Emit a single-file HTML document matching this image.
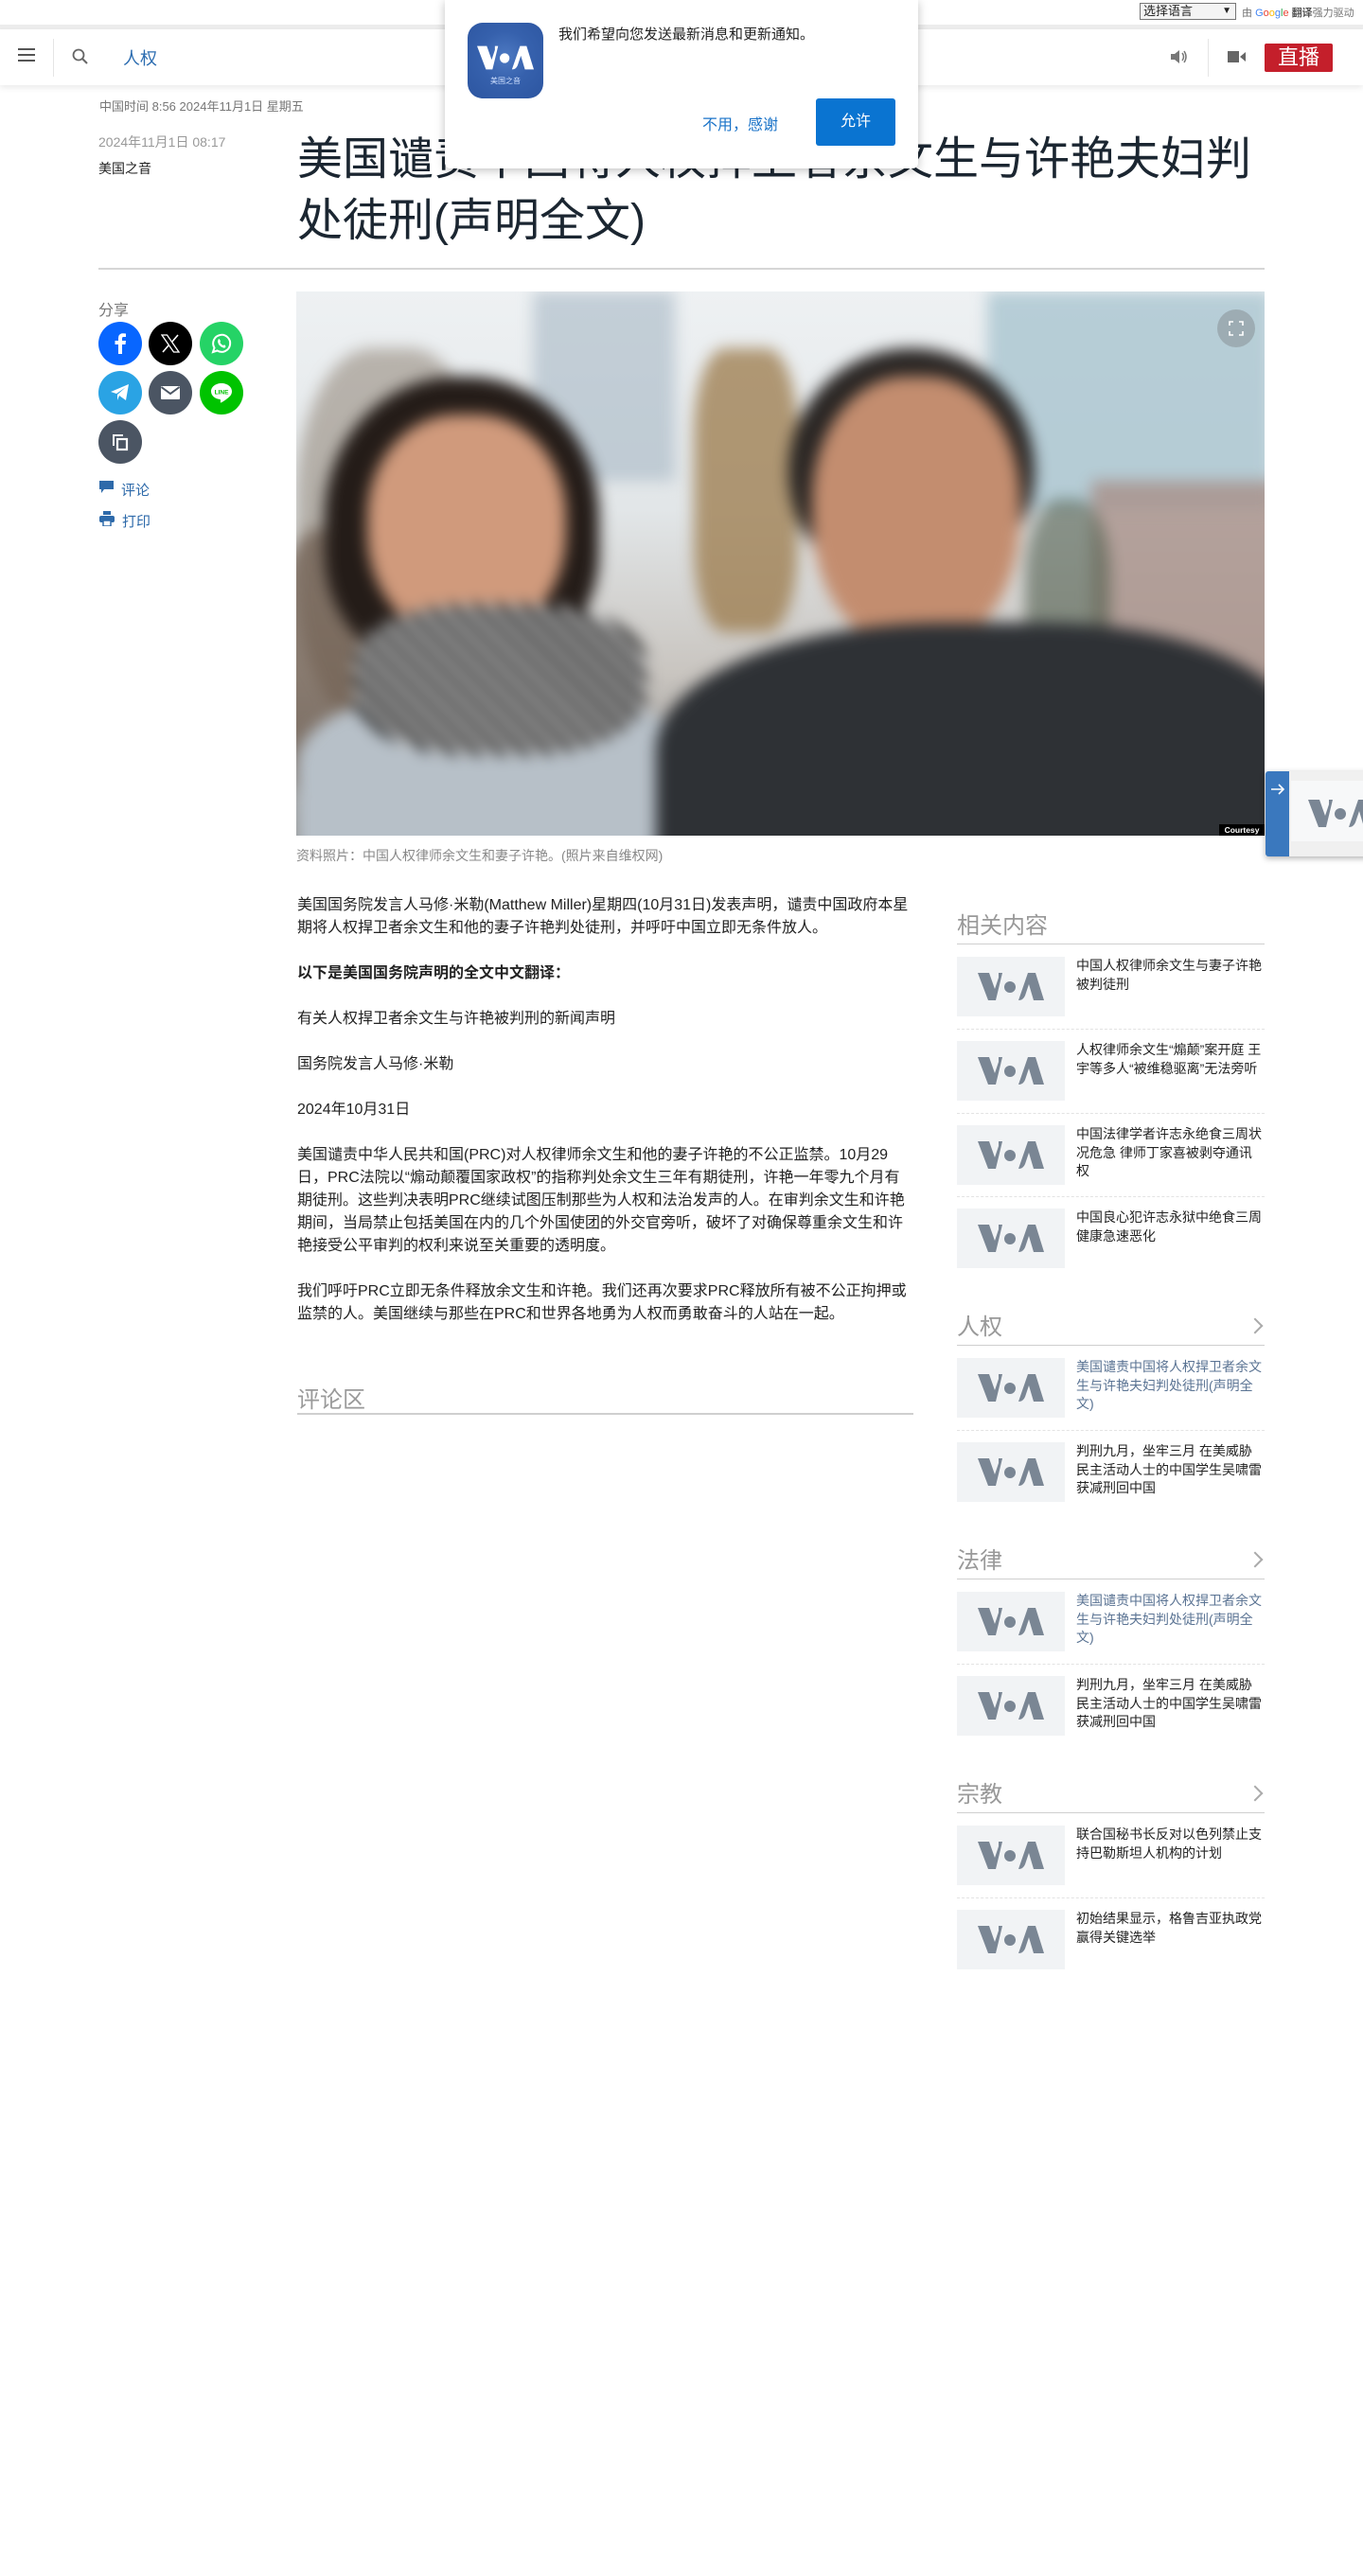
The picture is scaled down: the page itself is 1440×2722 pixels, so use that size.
<!DOCTYPE html>
<html lang="zh"><head><meta charset="utf-8">
<style>
*{box-sizing:border-box;margin:0;padding:0}
body{width:1440px;height:2722px;background:#fff;font-family:"Liberation Sans","Noto Sans CJK SC",sans-serif;color:#222;position:relative;overflow:hidden}
.abs{position:absolute}
.topbar{left:0;top:0;width:1440px;height:27px;background:#fff}
.band{left:0;top:26px;width:1440px;height:5px;background:#ececec}
.nav{left:0;top:31px;width:1440px;height:59px;background:#fff;box-shadow:0 3px 6px rgba(0,0,0,.08)}
.sel{left:1204px;top:3px;width:102px;height:18px;border:1px solid #767676;font-size:13px;padding-left:3px;line-height:16px;background:#f4f4f4}
.gt{left:1312px;top:5px;font-size:11px;color:#777}
.popup{left:470px;top:0;width:500px;height:178px;background:#fff;box-shadow:0 2px 10px rgba(0,0,0,.25);border-radius:0 0 6px 6px;z-index:50}
.circ{width:46px;height:46px;border-radius:50%;display:flex;align-items:center;justify-content:center}
.thumb{width:114px;height:63px;background:#f1f3f5;display:flex;align-items:center;justify-content:center}
.item{position:absolute;left:1011px;width:325px;height:63px}
.item .thumb{position:absolute;left:0;top:0}
.item .t{position:absolute;left:126px;top:0;width:197px;font-size:14px;line-height:19.5px;color:#222}
.item .t.b{color:#5a7393}
.dot{position:absolute;left:1011px;width:325px;border-top:1px dashed #e3e3e3}
.sh{position:absolute;left:1011px;width:325px;height:36px;border-bottom:1.5px solid #cfcfcf;font-size:24px;color:#999;line-height:34px}
.sh .chev{position:absolute;right:4px;top:9px;width:12px;height:12px;border-right:2px solid #aaa;border-top:2px solid #aaa;transform:rotate(45deg)}
.body{left:314px;top:945px;width:651px;font-size:16px;line-height:24px;color:#222}
.body p{margin-bottom:24px}
</style></head><body>

<div class="abs topbar"></div>
<div class="abs band"></div>
<div class="abs sel">选择语言 <span style="float:right;margin-right:4px;font-size:10px">▼</span></div>
<div class="abs gt">由 <span style="color:#4285f4">G</span><span style="color:#ea4335">o</span><span style="color:#fbbc05">o</span><span style="color:#4285f4">g</span><span style="color:#34a853">l</span><span style="color:#ea4335">e</span> <b style="color:#555">翻译</b>强力驱动</div>

<div class="abs nav">
  <svg class="abs" style="left:19px;top:19px" width="18" height="16" viewBox="0 0 18 16"><path d="M0 2H18M0 8H18M0 14H18" stroke="#555" stroke-width="2"/></svg>
  <div class="abs" style="left:56px;top:10px;width:1px;height:40px;background:#e5e5e5"></div>
  <svg class="abs" style="left:76px;top:20px" width="18" height="18" viewBox="0 0 18 18"><circle cx="7" cy="7" r="5.5" fill="none" stroke="#666" stroke-width="1.8"/><path d="M11 11L16 16" stroke="#666" stroke-width="2"/></svg>
  <div class="abs" style="left:130px;top:17px;font-size:18px;color:#2b6cb0">人权</div>
  <svg class="abs" style="left:1235px;top:20px" width="20" height="18" viewBox="0 0 20 18"><path d="M2 6H6L11 2V16L6 12H2Z" fill="#777"/><path d="M14 5Q17 9 14 13M16 3Q20 9 16 15" stroke="#777" stroke-width="1.5" fill="none"/></svg>
  <div class="abs" style="left:1276px;top:10px;width:1px;height:40px;background:#e5e5e5"></div>
  <svg class="abs" style="left:1297px;top:22px" width="20" height="14" viewBox="0 0 20 14"><rect x="0" y="1" width="12" height="12" fill="#666"/><path d="M13 7L19 2V12Z" fill="#666"/></svg>
  <div class="abs" style="left:1336px;top:15px;width:72px;height:30px;background:#c41f2b;border-radius:2px;color:#fff;font-size:22px;line-height:30px;text-align:center">直播</div>
</div>

<div class="abs" style="left:105px;top:102px;font-size:13px;color:#777">中国时间 8:56 2024年11月1日 星期五</div>
<div class="abs" style="left:104px;top:140px;font-size:14px;color:#999">2024年11月1日 08:17</div>
<div class="abs" style="left:104px;top:168px;font-size:14px;color:#222">美国之音</div>
<div class="abs" style="left:314px;top:136px;width:1030px;font-size:48px;line-height:65px;color:#1b2631">美国谴责中国将人权捍卫者余文生与许艳夫妇判处徒刑(声明全文)</div>
<div class="abs" style="left:104px;top:283px;width:1232px;height:2px;background:#d6d6d6"></div>

<div class="abs popup">
  <div class="abs" style="left:24px;top:24px;width:80px;height:80px;border-radius:16px;background:radial-gradient(circle at 50% 45%,#4d79c2 0,#3661ad 45%,#2c55a0 100%)">
    <svg class="abs" style="left:10px;top:24px" width="60" height="26" viewBox="0 0 70 29"><path d="M0 0H12L18 17L22 5V0H26L19 29H11Z" fill="#fff"/><circle cx="34" cy="15" r="6" fill="#fff"/><path d="M43 29L53 0H61L70 29H59L54 12L50 24Q48 29 43 29Z" fill="#fff"/></svg>
    <div class="abs" style="left:0;top:56px;width:80px;text-align:center;color:#cfe0ff;font-size:8px">美国之音</div>
  </div>
  <div class="abs" style="left:120px;top:25px;font-size:15px;color:#222">我们希望向您发送最新消息和更新通知。</div>
  <div class="abs" style="left:272px;top:118px;font-size:16px;color:#1a73c8">不用，感谢</div>
  <div class="abs" style="left:392px;top:104px;width:84px;height:50px;background:#0a74d1;border-radius:3px;color:#fff;font-size:16px;line-height:50px;text-align:center">允许</div>
</div>

<div class="abs" style="left:104px;top:314px;font-size:16px;color:#777">分享</div>
<div class="abs circ" style="left:104px;top:340px;background:#0866ff"><svg width="14" height="22" viewBox="0 0 14 22"><path d="M9 22V12H12.5L13 8H9V5.5Q9 4 10.5 4H13V0.5Q11.5 0.3 10 0.3Q5 0.3 5 5.5V8H1.5V12H5V22Z" fill="#fff"/></svg></div>
<div class="abs circ" style="left:157px;top:340px;background:#000"><svg width="20" height="20" viewBox="0 0 20 20"><path d="M1 1H6.5L19 19H13.5Z" fill="none" stroke="#fff" stroke-width="1.3"/><path d="M18 1L11.5 8.5M2 19L8.5 11.5" stroke="#fff" stroke-width="1.6"/></svg></div>
<div class="abs circ" style="left:211px;top:340px;background:#25d366"><svg width="24" height="24" viewBox="0 0 24 24"><path d="M3 21L4.5 16.5A9 9 0 1 1 7.5 19.5Z" fill="none" stroke="#fff" stroke-width="2"/><path d="M8.5 8Q9 6.5 10 7.5L11 9.5Q10.5 10.5 10.5 11Q12 13.5 14 14Q15 13 15.5 13.5L16.5 15Q16 17 14 16.5Q9 15 8 10Z" fill="#fff"/></svg></div>
<div class="abs circ" style="left:104px;top:392px;background:#2aa3e4"><svg width="22" height="20" viewBox="0 0 22 20"><path d="M1 9L20 1L17 18L10 13L8 18V12L17 4L7 11Z" fill="#fff"/></svg></div>
<div class="abs circ" style="left:157px;top:392px;background:#4b5563"><svg width="20" height="14" viewBox="0 0 20 14"><rect width="20" height="14" rx="1" fill="#fff"/><path d="M0.5 1L10 8L19.5 1" stroke="#4b5563" stroke-width="2" fill="none"/></svg></div>
<div class="abs circ" style="left:211px;top:392px;background:#00c300"><svg width="24" height="22" viewBox="0 0 24 22"><path d="M12 1C5.5 1 1 5 1 9.5C1 14 5 17.5 10.5 18C11.5 18.5 10.5 21 11 21.5C12 21.8 19 17 21.5 14C22.6 12.6 23 11 23 9.5C23 5 18.5 1 12 1Z" fill="#fff"/><text x="12" y="12.5" font-size="6.5" font-weight="bold" text-anchor="middle" fill="#00c300" font-family="Liberation Sans">LINE</text></svg></div>
<div class="abs circ" style="left:104px;top:444px;background:#4b5563"><svg width="20" height="20" viewBox="0 0 20 20"><path d="M3 14V3H13" fill="none" stroke="#fff" stroke-width="2"/><rect x="7" y="7" width="10" height="11" fill="none" stroke="#fff" stroke-width="2.2"/></svg></div>
<svg class="abs" style="left:105px;top:508px" width="15" height="14" viewBox="0 0 15 14"><path d="M0 0H15V9H5L2 13V9H0Z" fill="#2e6aaa"/></svg>
<div class="abs" style="left:128px;top:507px;font-size:15px;color:#2e6aaa">评论</div>
<svg class="abs" style="left:105px;top:540px" width="16" height="16" viewBox="0 0 16 16"><rect x="4" y="0" width="8" height="4" fill="#2e6aaa"/><rect x="0" y="5" width="16" height="7" rx="2" fill="#2e6aaa"/><rect x="4" y="10" width="8" height="6" fill="#fff" stroke="#2e6aaa" stroke-width="1.5"/></svg>
<div class="abs" style="left:129px;top:540px;font-size:15px;color:#2e6aaa">打印</div>

<!-- photo -->
<div class="abs" style="left:313px;top:308px;width:1023px;height:575px;overflow:hidden;background:linear-gradient(180deg,#eef1f3 0%,#e2e6e8 40%,#c9c5c0 70%,#8c8a88 100%)">
  <div class="abs" style="left:0;top:0;width:1023px;height:575px;filter:blur(8px)">
    <div class="abs" style="left:0;top:60px;width:200px;height:400px;background:#7a6a58;opacity:.45;border-radius:40%"></div>
    <div class="abs" style="left:-20px;top:250px;width:160px;height:300px;background:#5d4a3a;opacity:.6;border-radius:30%"></div>
    <div class="abs" style="left:250px;top:0;width:150px;height:200px;background:#a7b8c4;opacity:.6"></div>
    <div class="abs" style="left:730px;top:0;width:300px;height:230px;background:#a9c4d0;opacity:.8"></div>
    <div class="abs" style="left:840px;top:200px;width:200px;height:260px;background:#a89088;opacity:.8"></div>
    <div class="abs" style="left:770px;top:220px;width:90px;height:200px;background:#4d5a4a;opacity:.6;border-radius:40%"></div>
    <div class="abs" style="left:420px;top:60px;width:110px;height:300px;background:#9b7a4a;opacity:.75;border-radius:30%"></div>
    <div class="abs" style="left:30px;top:90px;width:290px;height:310px;background:#241c18;border-radius:48% 48% 40% 40%"></div>
    <div class="abs" style="left:75px;top:130px;width:210px;height:240px;background:#d09a7c;border-radius:45% 45% 48% 48%"></div>
    <div class="abs" style="left:0;top:420px;width:420px;height:200px;background:#b7c0c8;border-radius:40% 40% 0 0"></div>
    <div class="abs" style="left:60px;top:330px;width:310px;height:160px;background:repeating-linear-gradient(45deg,#1a1a1a 0 10px,#e8e8e8 10px 18px);border-radius:40%"></div>
    <div class="abs" style="left:520px;top:60px;width:260px;height:260px;background:#2a2624;border-radius:50%"></div>
    <div class="abs" style="left:545px;top:90px;width:220px;height:290px;background:#c38d6f;border-radius:45% 45% 48% 48%"></div>
    <div class="abs" style="left:380px;top:350px;width:680px;height:300px;background:#2e3135;border-radius:45% 40% 0 0"></div>
  </div>
  <div class="abs" style="left:973px;top:19px;width:40px;height:40px;border-radius:50%;background:rgba(140,150,155,.6)"><svg class="abs" style="left:12px;top:12px" width="16" height="16" viewBox="0 0 16 16"><path d="M1 5V1H5M11 1H15V5M15 11V15H11M5 15H1V11" fill="none" stroke="#fff" stroke-width="1.6"/></svg></div>
  <div class="abs" style="left:975px;top:563px;width:48px;height:12px;background:#000;color:#fff;font-size:8.5px;font-weight:bold;line-height:12px;text-align:center">Courtesy</div>
</div>
<div class="abs" style="left:313px;top:894px;font-size:14px;color:#888">资料照片：中国人权律师余文生和妻子许艳。(照片来自维权网)</div>

<div class="abs body">
<p>美国国务院发言人马修·米勒(Matthew Miller)星期四(10月31日)发表声明，谴责中国政府本星期将人权捍卫者余文生和他的妻子许艳判处徒刑，并呼吁中国立即无条件放人。</p>
<p><b>以下是美国国务院声明的全文中文翻译：</b></p>
<p>有关人权捍卫者余文生与许艳被判刑的新闻声明</p>
<p>国务院发言人马修·米勒</p>
<p>2024年10月31日</p>
<p>美国谴责中华人民共和国(PRC)对人权律师余文生和他的妻子许艳的不公正监禁。10月29日，PRC法院以“煽动颠覆国家政权”的指称判处余文生三年有期徒刑，许艳一年零九个月有期徒刑。这些判决表明PRC继续试图压制那些为人权和法治发声的人。在审判余文生和许艳期间，当局禁止包括美国在内的几个外国使团的外交官旁听，破坏了对确保尊重余文生和许艳接受公平审判的权利来说至关重要的透明度。</p>
<p>我们呼吁PRC立即无条件释放余文生和许艳。我们还再次要求PRC释放所有被不公正拘押或监禁的人。美国继续与那些在PRC和世界各地勇为人权而勇敢奋斗的人站在一起。</p>
</div>
<div class="abs" style="left:314px;top:1459px;font-size:24px;color:#9a9a9a">评论区</div>
<div class="abs" style="left:314px;top:1493px;width:651px;height:1.5px;background:#cfcfcf"></div>

<!-- sidebar -->
<div class="sh" style="top:962px">相关内容</div>
<div class="item" style="top:1011px"><div class="thumb">V</div><div class="t">中国人权律师余文生与妻子许艳被判徒刑</div></div>
<div class="dot" style="top:1087px"></div>
<div class="item" style="top:1100px"><div class="thumb">V</div><div class="t">人权律师余文生“煽颠”案开庭 王宇等多人“被维稳驱离”无法旁听</div></div>
<div class="dot" style="top:1176px"></div>
<div class="item" style="top:1189px"><div class="thumb">V</div><div class="t">中国法律学者许志永绝食三周状况危急 律师丁家喜被剥夺通讯权</div></div>
<div class="dot" style="top:1264px"></div>
<div class="item" style="top:1277px"><div class="thumb">V</div><div class="t">中国良心犯许志永狱中绝食三周健康急速恶化</div></div>

<div class="sh" style="top:1386px">人权<span class="chev"></span></div>
<div class="item" style="top:1435px"><div class="thumb">V</div><div class="t b">美国谴责中国将人权捍卫者余文生与许艳夫妇判处徒刑(声明全文)</div></div>
<div class="dot" style="top:1511px"></div>
<div class="item" style="top:1524px"><div class="thumb">V</div><div class="t">判刑九月，坐牢三月 在美威胁民主活动人士的中国学生吴啸雷获减刑回中国</div></div>

<div class="sh" style="top:1633px">法律<span class="chev"></span></div>
<div class="item" style="top:1682px"><div class="thumb">V</div><div class="t b">美国谴责中国将人权捍卫者余文生与许艳夫妇判处徒刑(声明全文)</div></div>
<div class="dot" style="top:1758px"></div>
<div class="item" style="top:1771px"><div class="thumb">V</div><div class="t">判刑九月，坐牢三月 在美威胁民主活动人士的中国学生吴啸雷获减刑回中国</div></div>

<div class="sh" style="top:1880px">宗教<span class="chev"></span></div>
<div class="item" style="top:1929px"><div class="thumb">V</div><div class="t">联合国秘书长反对以色列禁止支持巴勒斯坦人机构的计划</div></div>
<div class="dot" style="top:2005px"></div>
<div class="item" style="top:2018px"><div class="thumb">V</div><div class="t">初始结果显示，格鲁吉亚执政党赢得关键选举</div></div>

<!-- floating widget -->
<div class="abs" style="left:1337px;top:815px;width:110px;height:90px;background:#f0f0f0;box-shadow:0 2px 6px rgba(0,0,0,.3)">
  <div class="abs" style="left:0;top:0;width:25px;height:90px;background:#3a78be;border-radius:3px 0 0 3px"></div>
  <svg class="abs" style="left:5px;top:12px" width="16" height="14" viewBox="0 0 16 14"><path d="M1 7H14M9 2L14 7L9 12" stroke="#fff" stroke-width="1.6" fill="none"/></svg>
  <div class="abs" style="left:27px;top:10px;width:90px;height:64px;background:#f7f8f9"></div>
  <svg class="abs" style="left:45px;top:30px" width="70" height="29" viewBox="0 0 70 29"><path d="M0 0H12L18 17L22 5V0H26L19 29H11Z" fill="#7a8694"/><circle cx="34" cy="15" r="6" fill="#7a8694"/><path d="M43 29L53 0H61L70 29H59L54 12L50 24Q48 29 43 29Z" fill="#7a8694"/></svg>
</div>

<script>
document.querySelectorAll('.thumb').forEach(function(t){
 t.innerHTML='<svg width="70" height="29" viewBox="0 0 70 29"><path d="M0 0H12L18 17L22 5V0H26L19 29H11Z" fill="#7a8694"/><circle cx="34" cy="15" r="6" fill="#7a8694"/><path d="M43 29L53 0H61L70 29H59L54 12L50 24Q48 29 43 29Z" fill="#7a8694"/></svg>';
});
</script>
</body></html>
